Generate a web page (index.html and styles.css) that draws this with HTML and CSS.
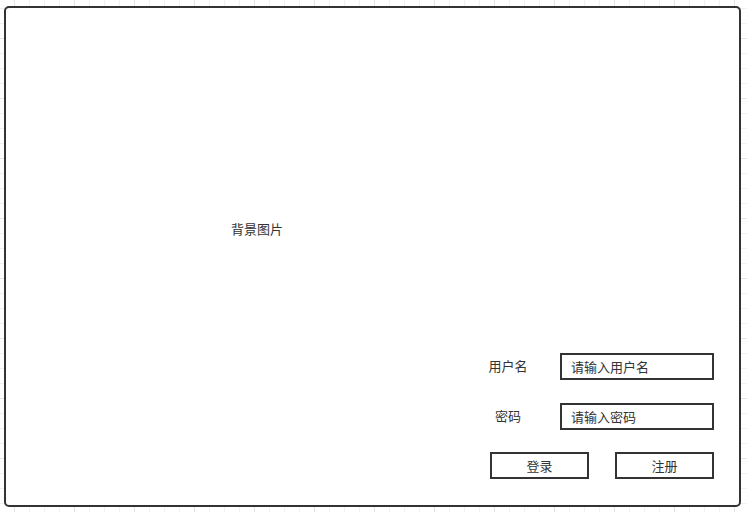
FILE: index.html
```html
<!DOCTYPE html>
<html lang="zh-CN">
<head>
    <meta charset="UTF-8">
    <meta name="viewport" content="width=device-width, initial-scale=1.0">
    <title>登录</title>
    <link rel="stylesheet" href="styles.css">
</head>
<body>
    <div class="login-frame">
        <div class="bg-area">
            <div class="bg-label">背景图片</div>
        </div>
        <form class="login-form" onsubmit="return false;">
            <div class="form-row">
                <label class="form-label" for="username">用户名</label>
                <input type="text" id="username" class="form-input" placeholder="请输入用户名">
            </div>
            <div class="form-row">
                <label class="form-label" for="password">密码</label>
                <input type="password" id="password" class="form-input" placeholder="请输入密码">
            </div>
            <div class="form-buttons">
                <button type="submit" class="form-button">登录</button>
                <button type="button" class="form-button">注册</button>
            </div>
        </form>
    </div>
</body>
</html>
```

FILE: styles.css
```css
html, body {
    height: 100%;
}
body {
    margin: 0;
    padding: 6px 0 0 4px;
    box-sizing: border-box;
    font-family: "Noto Sans CJK SC", "Liberation Sans", sans-serif;
    font-size: 13px;
    color: #333;
    background-color: #ffffff;
    background-image:
        linear-gradient(to right, #e4e4e4 1px, transparent 1px),
        linear-gradient(to bottom, #e4e4e4 1px, transparent 1px),
        linear-gradient(to right, #f0f0f0 1px, transparent 1px),
        linear-gradient(to bottom, #f0f0f0 1px, transparent 1px);
    background-size: 60px 60px, 60px 60px, 15px 15px, 15px 15px;
    background-position: 14px 0, 0 38px, 14px 0, 0 8px;
}
.login-frame {
    width: 737px;
    height: 501px;
    box-sizing: border-box;
    border: 2px solid #333;
    border-radius: 5px;
    background-color: #ffffff;
    display: flex;
    flex-direction: column;
    padding: 0 25px 26px 0;
}
.bg-area {
    flex-grow: 1;
    padding: 213px 0 0 225px;
}
.bg-label {
    line-height: 16px;
}
.login-form {
    width: 236px;
    margin-left: auto;
    display: flex;
    flex-direction: column;
}
.form-row {
    display: flex;
    align-items: center;
    margin-bottom: 23px;
}
.form-row + .form-row {
    margin-bottom: 22px;
}
.form-label {
    width: 60px;
    margin-right: 22px;
    padding-bottom: 2px;
    text-align: center;
    line-height: 16px;
}
.form-input {
    width: 154px;
    height: 27px;
    box-sizing: border-box;
    border: 2px solid #333;
    border-radius: 0;
    padding: 0 10px 1px 9px;
    margin: 0;
    font-family: inherit;
    font-size: 13px;
    color: #333;
    outline: none;
}
.form-input::placeholder {
    color: #333;
    opacity: 1;
}
.form-buttons {
    display: flex;
    justify-content: flex-end;
    gap: 26px;
}
.form-button {
    width: 99px;
    height: 27px;
    box-sizing: border-box;
    border: 2px solid #333;
    border-radius: 0;
    background-color: #ffffff;
    padding: 0 0 1px;
    font-family: inherit;
    font-size: 13px;
    color: #333;
    cursor: pointer;
}
```
